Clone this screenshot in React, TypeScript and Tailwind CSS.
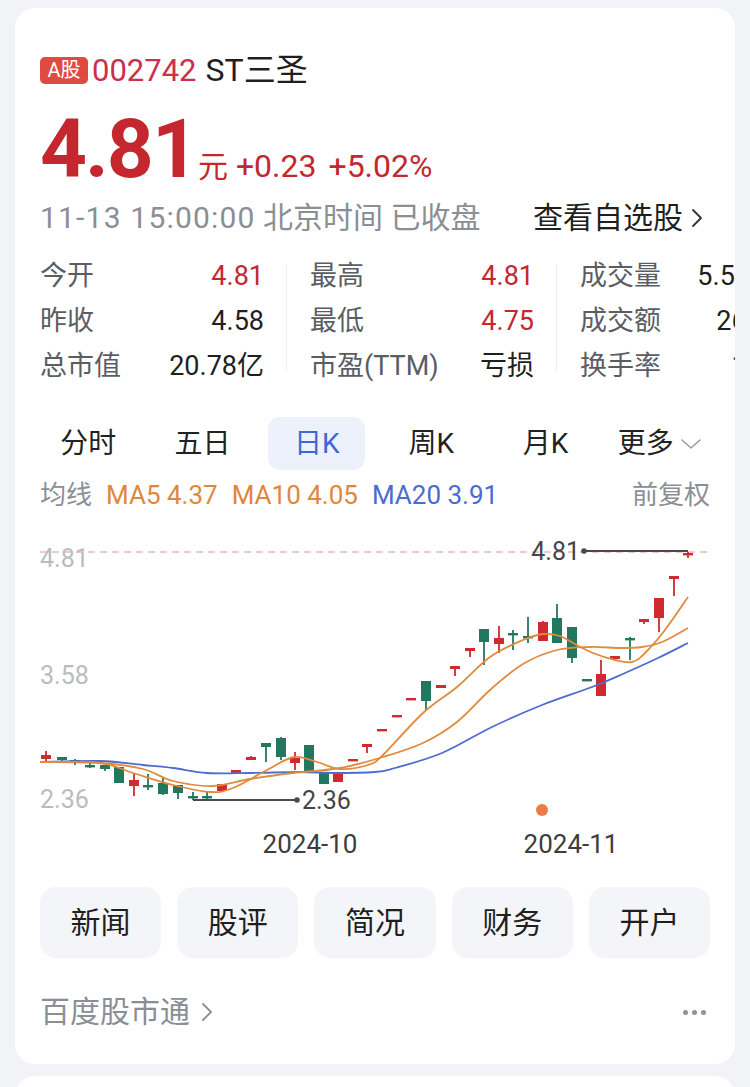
import React from "react";

type Candle = [number, number, number, number, number, "r" | "g"];

// x, wick top, body top, body bottom, wick bottom, colour (page pixel coords)
const candles: Candle[] = [
  [46, 751, 755, 759, 762, "r"],
  [62, 757, 757, 760, 763, "g"],
  [75, 759, 760, 762, 765, "g"],
  [90, 763, 765, 766, 768, "g"],
  [105, 765, 765, 769, 771, "g"],
  [119, 767, 767, 783, 783, "g"],
  [134, 773, 780, 786, 796, "r"],
  [148, 774, 785, 787, 790, "g"],
  [163, 778, 783, 794, 795, "g"],
  [178, 785, 785, 793, 799, "g"],
  [193, 792, 796, 798, 800, "g"],
  [207, 791, 796, 798, 800, "g"],
  [222, 784, 784, 791, 792, "r"],
  [236, 770, 770, 773, 773, "r"],
  [251, 756, 757, 760, 760, "r"],
  [266, 743, 743, 747, 762, "g"],
  [281, 737, 738, 757, 760, "g"],
  [295, 752, 758, 763, 770, "r"],
  [309, 745, 745, 772, 772, "g"],
  [324, 773, 773, 784, 784, "g"],
  [338, 772, 772, 782, 782, "r"],
  [353, 759, 759, 761, 761, "r"],
  [367, 744, 744, 747, 753, "r"],
  [382, 729, 729, 731, 731, "r"],
  [397, 715, 715, 717, 717, "r"],
  [411, 698, 698, 700, 700, "r"],
  [426, 681, 681, 701, 711, "g"],
  [441, 685, 685, 688, 688, "r"],
  [455, 666, 666, 669, 676, "r"],
  [470, 648, 648, 651, 657, "r"],
  [484, 629, 629, 642, 665, "g"],
  [499, 626, 638, 644, 653, "r"],
  [513, 630, 633, 635, 650, "g"],
  [528, 617, 636, 638, 643, "g"],
  [543, 621, 622, 641, 641, "r"],
  [557, 604, 618, 643, 643, "g"],
  [572, 627, 627, 658, 663, "g"],
  [587, 679, 679, 681, 681, "g"],
  [601, 660, 674, 696, 696, "r"],
  [615, 656, 656, 659, 659, "r"],
  [630, 637, 638, 640, 660, "g"],
  [644, 619, 619, 622, 624, "r"],
  [659, 598, 598, 618, 632, "r"],
  [674, 576, 576, 579, 596, "r"],
  [688, 552, 553, 555, 558, "r"],
];

const ma5 = [
  [40, 762], [100, 763], [133, 773], [173, 785], [210, 792], [233, 788],
  [267, 770], [294, 757], [317, 762], [340, 769], [368, 765], [383, 755],
  [423, 713], [457, 687], [490, 657], [523, 640], [543, 634], [560, 636],
  [573, 643], [593, 653], [615, 660], [632, 662], [645, 653], [665, 630],
  [688, 597],
];

const ma10 = [
  [40, 762], [100, 763], [143, 769], [173, 781], [213, 786], [250, 779],
  [293, 773], [340, 768], [383, 757], [423, 743], [457, 722], [490, 690],
  [523, 664], [557, 650], [590, 647], [620, 648], [642, 647], [662, 642],
  [688, 628],
];

const ma20 = [
  [40, 762], [100, 761], [143, 765], [173, 768], [207, 773], [250, 773],
  [300, 772], [333, 773], [375, 772], [395, 768], [442, 753], [492, 727],
  [542, 705], [592, 687], [625, 673], [658, 658], [688, 643],
];

function smooth(pts: number[][]) {
  let d = `M${pts[0][0]},${pts[0][1]}`;
  for (let i = 0; i < pts.length - 1; i++) {
    const p0 = pts[i - 1] || pts[i];
    const p1 = pts[i];
    const p2 = pts[i + 1];
    const p3 = pts[i + 2] || p2;
    const c1x = p1[0] + (p2[0] - p0[0]) / 6;
    const c1y = p1[1] + (p2[1] - p0[1]) / 6;
    const c2x = p2[0] - (p3[0] - p1[0]) / 6;
    const c2y = p2[1] - (p3[1] - p1[1]) / 6;
    d += ` C${c1x},${c1y} ${c2x},${c2y} ${p2[0]},${p2[1]}`;
  }
  return d;
}

const stats = [
  [
    ["今开", "4.81", "text-[#c5272f]"],
    ["昨收", "4.58", "text-[#1f1f1f]"],
    ["总市值", "20.78亿", "text-[#1f1f1f]"],
  ],
  [
    ["最高", "4.81", "text-[#c5272f]"],
    ["最低", "4.75", "text-[#c5272f]"],
    ["市盈(TTM)", "亏损", "text-[#1f1f1f]"],
  ],
  [
    ["成交量", "5.53万手", "text-[#1f1f1f]"],
    ["成交额", "2646万", "text-[#1f1f1f]"],
    ["换手率", "1.23%", "text-[#1f1f1f]"],
  ],
];

const tabs = ["分时", "五日", "日K", "周K", "月K"];
const actions = ["新闻", "股评", "简况", "财务", "开户"];

export default function App() {
  return (
    <div className="min-h-[1087px] bg-[#f2f3f7] px-[15px] pt-[8px] font-['Roboto','Noto_Sans_CJK_SC',sans-serif]">
      <div className="overflow-hidden rounded-[20px] bg-white px-[25px] pt-[44px] pb-[34px]">
        {/* title */}
        <div className="flex h-[36px] items-center">
          <span className="mr-[4px] flex h-[27px] w-[48px] items-center justify-center rounded-[5px] bg-[#df4b3f] text-[20px] leading-none text-white">
            A股
          </span>
          <span className="text-[31px] leading-none text-[#cc2f4b]">002742</span>
          <span className="ml-[9px] text-[32px] leading-none text-[#1f1f1f]">ST三圣</span>
        </div>

        {/* price */}
        <div className="mt-[20px] flex h-[82px] items-baseline">
          <span className="text-[82px] font-bold leading-[82px] tracking-[-2px] text-[#c5272f]">4.81</span>
          <span className="ml-[1px] text-[30px] text-[#c5272f]">元</span>
          <span className="ml-[8px] text-[32px] text-[#c5272f]">+0.23</span>
          <span className="ml-[12px] text-[32px] text-[#c5272f]">+5.02%</span>
        </div>

        {/* time */}
        <div className="mt-[10px] flex h-[36px] items-center justify-between">
          <span className="text-[30px] leading-none text-[#8b8e95]">
            <span className="tracking-[1.2px]">11-13 15:00:00</span> 北京时间 已收盘
          </span>
          <span className="mr-[7px] flex items-center text-[30px] leading-none text-[#1f1f1f]">
            查看自选股
            <ChevronRight className="ml-[8px] h-[20px] w-[12px] text-[#333]" />
          </span>
        </div>

        {/* stats */}
        <div className="mt-[18px] flex">
          {stats.map((col, ci) => (
            <React.Fragment key={ci}>
              {ci > 0 && <div className="mt-[10px] mb-[17px] ml-[22px] mr-[23px] w-px shrink-0 bg-[#eeeff2]" />}
              <div className="w-[224px] shrink-0">
                {col.map(([label, value, color]) => (
                  <div key={label} className="flex h-[45px] items-center justify-between text-[27px] leading-none">
                    <span className="text-[#5a5d63]">{label}</span>
                    <span className={color}>{value}</span>
                  </div>
                ))}
              </div>
            </React.Fragment>
          ))}
        </div>

        {/* tabs */}
        <div className="mt-[28px] -ml-[9px] grid h-[53px] w-[686px] grid-cols-6">
          {tabs.map((t) => (
            <div key={t} className="flex items-center justify-center">
              {t === "日K" ? (
                <span className="flex h-[53px] w-[97px] items-center justify-center rounded-[12px] bg-[#edf1fc] text-[28px] text-[#3f67d6]">
                  {t}
                </span>
              ) : (
                <span className="text-[28px] text-[#222]">{t}</span>
              )}
            </div>
          ))}
          <div className="flex items-center justify-center">
            <span className="text-[28px] text-[#222]">更多</span>
            <ChevronDown className="ml-[6px] h-[12px] w-[22px] text-[#9a9da3]" />
          </div>
        </div>

        {/* MA legend */}
        <div className="mt-[10px] flex h-[30px] items-center justify-between text-[26px] leading-none">
          <div className="flex items-center gap-[14px]">
            <span className="text-[#8b8e95]">均线</span>
            <span className="text-[#e0873b]">MA5 4.37</span>
            <span className="text-[#e0873b]">MA10 4.05</span>
            <span className="text-[#4a6bd0]">MA20 3.91</span>
          </div>
          <span className="text-[#8b8e95]">前复权</span>
        </div>

        {/* chart */}
        <svg
          width="720"
          height="330"
          viewBox="15 530 720 330"
          className="mt-[20px] -ml-[25px] block"
          fontFamily="Roboto, sans-serif"
        >
          <text x="40" y="567" fontSize="25" fill="#b9bcc1">4.81</text>
          <text x="40" y="684" fontSize="25" fill="#b9bcc1">3.58</text>
          <text x="40" y="808" fontSize="25" fill="#b9bcc1">2.36</text>
          <line x1="40" y1="552" x2="712" y2="552" stroke="#e6b9b9" strokeWidth="1.5" strokeDasharray="7 5" />

          {candles.map(([x, hi, top, bot, lo, c]) => {
            const fill = c === "r" ? "#cf2a30" : "#22785f";
            return (
              <g key={x} fill={fill}>
                <rect x={x - 0.9} y={hi} width="1.8" height={lo - hi} />
                <rect x={x - 5} y={top} width="10" height={Math.max(bot - top, 2.4)} />
              </g>
            );
          })}

          <path d={smooth(ma20)} fill="none" stroke="#4e6ccf" strokeWidth="1.8" />
          <path d={smooth(ma10)} fill="none" stroke="#e08b3e" strokeWidth="1.8" />
          <path d={smooth(ma5)} fill="none" stroke="#e3893a" strokeWidth="1.8" />

          <text x="580" y="560" fontSize="25" fill="#454545" textAnchor="end">4.81</text>
          <line x1="584" y1="551" x2="688" y2="551" stroke="#4a4a4a" strokeWidth="2" />
          <circle cx="584" cy="551" r="2.8" fill="#4a4a4a" />

          <line x1="193" y1="800" x2="297" y2="800" stroke="#4a4a4a" strokeWidth="2" />
          <circle cx="297" cy="800" r="2.8" fill="#4a4a4a" />
          <text x="302" y="809" fontSize="25" fill="#454545">2.36</text>

          <circle cx="542" cy="810" r="6" fill="#ec7b45" />
          <text x="310" y="853" fontSize="26" fill="#3d3d3d" textAnchor="middle">2024-10</text>
          <text x="571" y="853" fontSize="26" fill="#3d3d3d" textAnchor="middle">2024-11</text>
        </svg>

        {/* actions */}
        <div className="mt-[27px] grid grid-cols-5 gap-[16px]">
          {actions.map((a) => (
            <button
              key={a}
              type="button"
              className="flex h-[71px] items-center justify-center rounded-[16px] bg-[#f4f5f8] text-[30px] text-[#1f1f1f]"
            >
              {a}
            </button>
          ))}
        </div>

        {/* footer */}
        <div className="mt-[36px] flex h-[36px] items-center justify-between">
          <span className="flex items-center text-[30px] leading-none text-[#8b8e95]">
            百度股市通
            <ChevronRight className="ml-[11px] h-[20px] w-[12px] text-[#8b8e95]" />
          </span>
          <span className="flex gap-[4px] pr-[4px]">
            <span className="h-[5px] w-[5px] rounded-full bg-[#8f9297]" />
            <span className="h-[5px] w-[5px] rounded-full bg-[#8f9297]" />
            <span className="h-[5px] w-[5px] rounded-full bg-[#8f9297]" />
          </span>
        </div>
      </div>

      <div className="mt-[12px] h-[60px] rounded-t-[20px] bg-white" />
    </div>
  );
}

/* ---------------- icons ---------------- */

function ChevronRight({ className = "" }: { className?: string }) {
  return (
    <svg viewBox="0 0 12 20" fill="none" stroke="currentColor" strokeWidth="1.8" strokeLinecap="round" strokeLinejoin="round" className={className} aria-hidden>
      <polyline points="2 2 10 10 2 18" />
    </svg>
  );
}

function ChevronDown({ className = "" }: { className?: string }) {
  return (
    <svg viewBox="0 0 22 12" fill="none" stroke="currentColor" strokeWidth="1.6" strokeLinecap="round" strokeLinejoin="round" className={className} aria-hidden>
      <polyline points="2 2 11 10 20 2" />
    </svg>
  );
}
